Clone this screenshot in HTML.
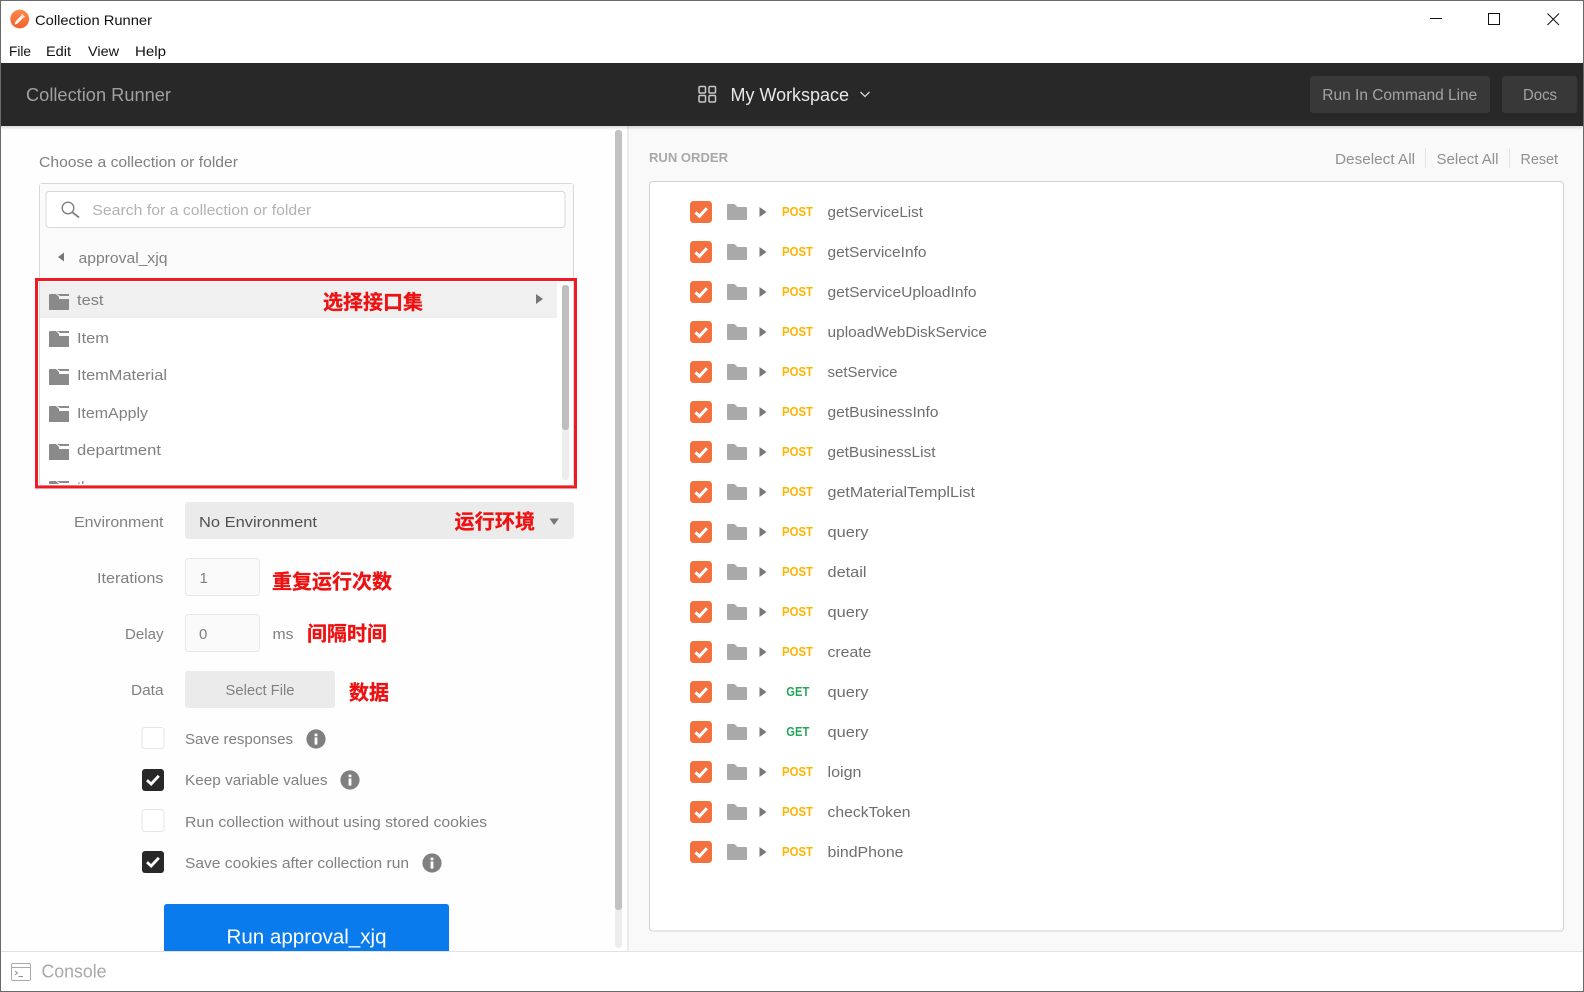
<!DOCTYPE html>
<html><head><meta charset="utf-8"><title>Collection Runner</title>
<style>
html,body{margin:0;padding:0;background:#fff;width:1584px;height:992px;overflow:hidden}
svg{display:block}
text{font-family:"Liberation Sans","Noto Sans CJK SC",sans-serif;white-space:pre}
.g{fill:#808080;font-size:15px}
.p{fill:#b2b2b2;font-size:15px}
.n{fill:#6e6e6e;font-size:15px;transform:translateY(-.6px)}
.po{fill:#ffb400;font-size:13px;font-weight:bold}
.ge{fill:#26a65b;font-size:13px;font-weight:bold}
.r{fill:#ee1111;stroke:#ee1111;stroke-width:.3px;font-size:20px;font-weight:bold;font-family:"Liberation Sans","Noto Sans CJK SC",sans-serif}
.m{fill:#111;font-size:14px}
.l{fill:#909090;font-size:15px}
</style></head><body>
<svg width="1584" height="992" viewBox="0 0 1584 992" xmlns="http://www.w3.org/2000/svg">
<defs>
<linearGradient id="lg" x1="0" y1="0" x2="0" y2="1"><stop offset="0" stop-color="#ff8a4c"/><stop offset="1" stop-color="#f0602a"/></linearGradient>
<linearGradient id="sh" x1="0" y1="0" x2="0" y2="1"><stop offset="0" stop-color="#000" stop-opacity=".14"/><stop offset="1" stop-color="#000" stop-opacity="0"/></linearGradient>
<symbol id="cf" width="20" height="16" viewBox="0 0 20 16"><path d="M0 1Q0 0 1 0H7L10 3V5H20V16H0Z" fill="#8a8a8a"/><path d="M8 0H20V2H11Z" fill="#8a8a8a"/></symbol>
<symbol id="ff" width="20" height="16" viewBox="0 0 20 16"><path d="M0 1Q0 0 1 0H7.5L10.5 3H19Q20 3 20 4V15Q20 16 19 16H1Q0 16 0 15Z" fill="#a9a9a9"/></symbol>
<symbol id="ck" width="22" height="22" viewBox="0 0 22 22"><rect width="22" height="22" rx="3.5" fill="#f4703e"/><path d="M5.5 11.5L9.5 15.2L16.8 7.2" fill="none" stroke="#fff" stroke-width="3"/></symbol>
<symbol id="tr" width="7" height="10" viewBox="0 0 7 10"><path d="M0 0L7 5L0 10Z" fill="#777"/></symbol>
<symbol id="dk" width="22" height="22" viewBox="0 0 22 22"><rect width="22" height="22" rx="3" fill="#282828"/><path d="M5 11.2L9.2 15L16.8 6.8" fill="none" stroke="#fff" stroke-width="2.8"/></symbol>
<symbol id="in" width="20" height="20" viewBox="0 0 20 20"><circle cx="10" cy="10" r="9.6" fill="#808080"/><rect x="8.6" y="8.4" width="2.8" height="7.2" fill="#fff"/><rect x="8.6" y="4.6" width="2.8" height="2.6" fill="#fff"/></symbol>
</defs>

<!-- window -->
<rect width="1584" height="992" fill="#fff"/>

<!-- left + right pane backgrounds -->
<rect x="0" y="126" width="627" height="826" fill="#fefefe"/>
<rect x="627" y="126" width="957" height="826" fill="#f9f9f9"/>
<rect x="627" y="126" width="2" height="826" fill="#ebebeb"/>

<!-- title bar -->
<circle cx="19.7" cy="19" r="9.4" fill="url(#lg)"/>
<path d="M14.5 24.5L15.5 21.5L21.5 15.5L23.5 17.5L17.5 23.5Z" fill="#fff"/>
<path d="M22 13.8L25 16.8L24 17.8L21 14.8Z" fill="#ffe9dd"/>
<text x="35" y="25" class="m" textLength="117" lengthAdjust="spacingAndGlyphs">Collection Runner</text>
<text x="9" y="56" class="m" textLength="22" lengthAdjust="spacingAndGlyphs">File</text>
<text x="46" y="56" class="m" textLength="25" lengthAdjust="spacingAndGlyphs">Edit</text>
<text x="88" y="56" class="m" textLength="31" lengthAdjust="spacingAndGlyphs">View</text>
<text x="135" y="56" class="m" textLength="31" lengthAdjust="spacingAndGlyphs">Help</text>
<rect x="1430" y="18" width="12" height="1" fill="#111"/>
<rect x="1488.5" y="13.5" width="11" height="11" fill="none" stroke="#111"/>
<path d="M1547.5 13.5L1559 25M1559 13.5L1547.5 25" stroke="#111" fill="none"/>

<!-- header -->
<rect x="0" y="63" width="1584" height="63" fill="#282828"/>
<rect x="0" y="126" width="1584" height="4" fill="url(#sh)"/>
<text x="26" y="101" fill="#a0a0a0" font-size="18.5" textLength="145" lengthAdjust="spacingAndGlyphs">Collection Runner</text>
<g fill="none" stroke="#c8c8c8" stroke-width="1.5">
<rect x="699" y="86.5" width="6.5" height="6.5" rx="1.2"/><rect x="709" y="86.5" width="6.5" height="6.5" rx="1.2"/>
<rect x="699" y="95.5" width="6.5" height="6.5" rx="1.2"/><rect x="709" y="95.5" width="6.5" height="6.5" rx="1.2"/>
</g>
<text x="730.5" y="101" fill="#e8e8e8" font-size="18.5" textLength="118.5" lengthAdjust="spacingAndGlyphs">My Workspace</text>
<path d="M860.5 92L865 96.5L869.5 92" fill="none" stroke="#d8d8d8" stroke-width="1.3"/>
<rect x="1310" y="76" width="180" height="37" rx="3" fill="#383838"/>
<text x="1322.3" y="100" fill="#a4a4a4" font-size="15.5" textLength="155" lengthAdjust="spacingAndGlyphs">Run In Command Line</text>
<rect x="1502" y="76" width="75" height="37" rx="3" fill="#383838"/>
<text x="1523" y="100" fill="#a4a4a4" font-size="15.5" textLength="34" lengthAdjust="spacingAndGlyphs">Docs</text>

<!-- left: chooser -->
<text x="39" y="167" class="g" textLength="199" lengthAdjust="spacingAndGlyphs">Choose a collection or folder</text>
<rect x="39.5" y="183.5" width="534" height="302" rx="3" fill="#fff" stroke="#d8d8d8"/>
<rect x="40" y="184" width="533" height="97" fill="#fbfbfb"/>
<rect x="46" y="191.5" width="519" height="36" rx="3" fill="#fff" stroke="#d8d8d8"/>
<circle cx="68" cy="208" r="5.8" fill="none" stroke="#808080" stroke-width="1.4"/>
<path d="M72.2 212.2L79 217.5" stroke="#808080" stroke-width="1.8" fill="none"/>
<text x="92.3" y="215" class="p" textLength="219" lengthAdjust="spacingAndGlyphs">Search for a collection or folder</text>
<path d="M64 252.5L58 257L64 261.5Z" fill="#777"/>
<text x="78.5" y="263" class="g" textLength="89" lengthAdjust="spacingAndGlyphs">approval_xjq</text>

<!-- list -->
<rect x="40" y="282" width="517" height="36" fill="#f0f0f0"/>
<use href="#cf" x="49" y="294"/><text x="77" y="305" class="g" textLength="26.5" lengthAdjust="spacingAndGlyphs">test</text>
<use href="#cf" x="49" y="331"/><text x="77" y="343" class="g" textLength="32" lengthAdjust="spacingAndGlyphs">Item</text>
<use href="#cf" x="49" y="369"/><text x="77" y="380" class="g" textLength="90" lengthAdjust="spacingAndGlyphs">ItemMaterial</text>
<use href="#cf" x="49" y="406"/><text x="77" y="418" class="g" textLength="71" lengthAdjust="spacingAndGlyphs">ItemApply</text>
<use href="#cf" x="49" y="444"/><text x="77" y="455" class="g" textLength="84" lengthAdjust="spacingAndGlyphs">department</text>
<svg x="40" y="470" width="100" height="14"><use href="#cf" x="9" y="11"/><text x="37" y="22" class="g">the</text></svg>
<use href="#tr" x="536" y="294"/>
<rect x="562" y="285" width="7" height="195" rx="3" fill="#ededed"/>
<rect x="562" y="285" width="7" height="145" rx="3" fill="#bfbfbf"/>
<rect x="36.5" y="279.5" width="539" height="207.5" fill="none" stroke="#ed1c24" stroke-width="3"/>
<text x="323" y="309" class="r" textLength="100">选择接口集</text>

<!-- env -->
<text x="74" y="527" class="g" textLength="89.5" lengthAdjust="spacingAndGlyphs">Environment</text>
<rect x="185" y="502" width="389" height="37" rx="3" fill="#ebebeb"/>
<text x="199" y="527" fill="#505050" font-size="15" textLength="118" lengthAdjust="spacingAndGlyphs">No Environment</text>
<text x="454.5" y="528.5" class="r" textLength="80.5">运行环境</text>
<path d="M549.5 518.5H558.8L554.1 525Z" fill="#777"/>

<text x="97" y="583" class="g" textLength="66.5" lengthAdjust="spacingAndGlyphs">Iterations</text>
<rect x="185.5" y="558.5" width="74" height="37" rx="3" fill="#fafafa" stroke="#e8e8e8"/>
<text x="199.5" y="583" class="g">1</text>
<text x="272" y="588.5" class="r" textLength="120">重复运行次数</text>

<text x="125" y="639" class="g" textLength="38.5" lengthAdjust="spacingAndGlyphs">Delay</text>
<rect x="185.5" y="614.5" width="74" height="37" rx="3" fill="#fafafa" stroke="#e8e8e8"/>
<text x="199" y="639" class="g">0</text>
<text x="272.5" y="639" class="g" textLength="21" lengthAdjust="spacingAndGlyphs">ms</text>
<text x="307" y="640.5" class="r" textLength="80">间隔时间</text>

<text x="131" y="695" class="g" textLength="32.5" lengthAdjust="spacingAndGlyphs">Data</text>
<rect x="185" y="671" width="150" height="37" rx="3" fill="#ebebeb"/>
<text x="225.5" y="695" class="g" textLength="69" lengthAdjust="spacingAndGlyphs">Select File</text>
<text x="349" y="699.5" class="r" textLength="40">数据</text>

<rect x="142" y="727.5" width="22" height="21" rx="3" fill="#fff" stroke="#e6e6e6"/>
<text x="185" y="744" class="g" textLength="108" lengthAdjust="spacingAndGlyphs">Save responses</text>
<use href="#in" x="306" y="729"/>
<use href="#dk" x="142" y="769"/>
<text x="185" y="785" class="g" textLength="142.5" lengthAdjust="spacingAndGlyphs">Keep variable values</text>
<use href="#in" x="340" y="770"/>
<rect x="142" y="809.5" width="22" height="22" rx="3" fill="#fff" stroke="#e6e6e6"/>
<text x="185" y="827" class="g" textLength="302" lengthAdjust="spacingAndGlyphs">Run collection without using stored cookies</text>
<use href="#dk" x="142" y="851"/>
<text x="185" y="868" class="g" textLength="224" lengthAdjust="spacingAndGlyphs">Save cookies after collection run</text>
<use href="#in" x="422" y="853"/>

<path d="M164 951V907Q164 904 167 904H446Q449 904 449 907V951Z" fill="#097bed"/>
<text x="226.5" y="943.5" fill="#fff" font-size="20" textLength="160" lengthAdjust="spacingAndGlyphs">Run approval_xjq</text>

<!-- left scrollbar -->
<rect x="615" y="130" width="7" height="818" rx="3" fill="#ededed"/>
<rect x="615" y="130" width="7" height="780" rx="3" fill="#c2c2c2"/>

<!-- right -->
<text x="649" y="162" fill="#a8a8a8" font-size="13" font-weight="bold" textLength="79" lengthAdjust="spacingAndGlyphs">RUN ORDER</text>
<text x="1335" y="164" class="l" textLength="80" lengthAdjust="spacingAndGlyphs">Deselect All</text>
<rect x="1425" y="148" width="1" height="20" fill="#e4e4e4"/>
<text x="1436.5" y="164" class="l" textLength="62" lengthAdjust="spacingAndGlyphs">Select All</text>
<rect x="1509" y="148" width="1" height="20" fill="#e4e4e4"/>
<text x="1520.5" y="164" class="l" textLength="37.5" lengthAdjust="spacingAndGlyphs">Reset</text>
<rect x="649.5" y="181.5" width="914" height="749.5" rx="3" fill="#fff" stroke="#d2d2d2"/>

<use href="#ck" x="690" y="201"/><use href="#ff" x="727" y="204"/><use href="#tr" x="759.5" y="207"/><text x="782" y="216" class="po" textLength="31" lengthAdjust="spacingAndGlyphs">POST</text><text x="827.5" y="217.5" class="n" textLength="95.5" lengthAdjust="spacingAndGlyphs">getServiceList</text>
<use href="#ck" x="690" y="241"/><use href="#ff" x="727" y="244"/><use href="#tr" x="759.5" y="247"/><text x="782" y="256" class="po" textLength="31" lengthAdjust="spacingAndGlyphs">POST</text><text x="827.5" y="257.5" class="n" textLength="99" lengthAdjust="spacingAndGlyphs">getServiceInfo</text>
<use href="#ck" x="690" y="281"/><use href="#ff" x="727" y="284"/><use href="#tr" x="759.5" y="287"/><text x="782" y="296" class="po" textLength="31" lengthAdjust="spacingAndGlyphs">POST</text><text x="827.5" y="297.5" class="n" textLength="149" lengthAdjust="spacingAndGlyphs">getServiceUploadInfo</text>
<use href="#ck" x="690" y="321"/><use href="#ff" x="727" y="324"/><use href="#tr" x="759.5" y="327"/><text x="782" y="336" class="po" textLength="31" lengthAdjust="spacingAndGlyphs">POST</text><text x="827.5" y="337.5" class="n" textLength="159.5" lengthAdjust="spacingAndGlyphs">uploadWebDiskService</text>
<use href="#ck" x="690" y="361"/><use href="#ff" x="727" y="364"/><use href="#tr" x="759.5" y="367"/><text x="782" y="376" class="po" textLength="31" lengthAdjust="spacingAndGlyphs">POST</text><text x="827.5" y="377.5" class="n" textLength="70" lengthAdjust="spacingAndGlyphs">setService</text>
<use href="#ck" x="690" y="401"/><use href="#ff" x="727" y="404"/><use href="#tr" x="759.5" y="407"/><text x="782" y="416" class="po" textLength="31" lengthAdjust="spacingAndGlyphs">POST</text><text x="827.5" y="417.5" class="n" textLength="111" lengthAdjust="spacingAndGlyphs">getBusinessInfo</text>
<use href="#ck" x="690" y="441"/><use href="#ff" x="727" y="444"/><use href="#tr" x="759.5" y="447"/><text x="782" y="456" class="po" textLength="31" lengthAdjust="spacingAndGlyphs">POST</text><text x="827.5" y="457.5" class="n" textLength="108" lengthAdjust="spacingAndGlyphs">getBusinessList</text>
<use href="#ck" x="690" y="481"/><use href="#ff" x="727" y="484"/><use href="#tr" x="759.5" y="487"/><text x="782" y="496" class="po" textLength="31" lengthAdjust="spacingAndGlyphs">POST</text><text x="827.5" y="497.5" class="n" textLength="147.5" lengthAdjust="spacingAndGlyphs">getMaterialTemplList</text>
<use href="#ck" x="690" y="521"/><use href="#ff" x="727" y="524"/><use href="#tr" x="759.5" y="527"/><text x="782" y="536" class="po" textLength="31" lengthAdjust="spacingAndGlyphs">POST</text><text x="827.5" y="537.5" class="n" textLength="41" lengthAdjust="spacingAndGlyphs">query</text>
<use href="#ck" x="690" y="561"/><use href="#ff" x="727" y="564"/><use href="#tr" x="759.5" y="567"/><text x="782" y="576" class="po" textLength="31" lengthAdjust="spacingAndGlyphs">POST</text><text x="827.5" y="577.5" class="n" textLength="39" lengthAdjust="spacingAndGlyphs">detail</text>
<use href="#ck" x="690" y="601"/><use href="#ff" x="727" y="604"/><use href="#tr" x="759.5" y="607"/><text x="782" y="616" class="po" textLength="31" lengthAdjust="spacingAndGlyphs">POST</text><text x="827.5" y="617.5" class="n" textLength="41" lengthAdjust="spacingAndGlyphs">query</text>
<use href="#ck" x="690" y="641"/><use href="#ff" x="727" y="644"/><use href="#tr" x="759.5" y="647"/><text x="782" y="656" class="po" textLength="31" lengthAdjust="spacingAndGlyphs">POST</text><text x="827.5" y="657.5" class="n" textLength="44" lengthAdjust="spacingAndGlyphs">create</text>
<use href="#ck" x="690" y="681"/><use href="#ff" x="727" y="684"/><use href="#tr" x="759.5" y="687"/><text x="786.3" y="696" class="ge" textLength="23" lengthAdjust="spacingAndGlyphs">GET</text><text x="827.5" y="697.5" class="n" textLength="41" lengthAdjust="spacingAndGlyphs">query</text>
<use href="#ck" x="690" y="721"/><use href="#ff" x="727" y="724"/><use href="#tr" x="759.5" y="727"/><text x="786.3" y="736" class="ge" textLength="23" lengthAdjust="spacingAndGlyphs">GET</text><text x="827.5" y="737.5" class="n" textLength="41" lengthAdjust="spacingAndGlyphs">query</text>
<use href="#ck" x="690" y="761"/><use href="#ff" x="727" y="764"/><use href="#tr" x="759.5" y="767"/><text x="782" y="776" class="po" textLength="31" lengthAdjust="spacingAndGlyphs">POST</text><text x="827.5" y="777.5" class="n" textLength="34" lengthAdjust="spacingAndGlyphs">loign</text>
<use href="#ck" x="690" y="801"/><use href="#ff" x="727" y="804"/><use href="#tr" x="759.5" y="807"/><text x="782" y="816" class="po" textLength="31" lengthAdjust="spacingAndGlyphs">POST</text><text x="827.5" y="817.5" class="n" textLength="83" lengthAdjust="spacingAndGlyphs">checkToken</text>
<use href="#ck" x="690" y="841"/><use href="#ff" x="727" y="844"/><use href="#tr" x="759.5" y="847"/><text x="782" y="856" class="po" textLength="31" lengthAdjust="spacingAndGlyphs">POST</text><text x="827.5" y="857.5" class="n" textLength="76" lengthAdjust="spacingAndGlyphs">bindPhone</text>

<!-- footer -->
<rect x="0" y="951" width="1584" height="41" fill="#fff"/>
<rect x="0" y="951" width="1584" height="1" fill="#e2e2e2"/>
<rect x="11.5" y="963.5" width="19" height="17" rx="1.5" fill="#fff" stroke="#a8a8a8"/>
<path d="M12 967.5H30" stroke="#a8a8a8" fill="none"/>
<path d="M15 971L17.5 973L15 975M18.5 976.5H23" stroke="#909090" fill="none"/>
<text x="41.5" y="977.5" fill="#a8a8a8" font-size="18.5" textLength="65" lengthAdjust="spacingAndGlyphs">Console</text>

<!-- window border -->
<rect x="0" y="0" width="1584" height="1" fill="#6a6a6a"/>
<rect x="0" y="0" width="1" height="992" fill="#6a6a6a"/>
<rect x="1583" y="0" width="1" height="992" fill="#6a6a6a"/>
<rect x="0" y="991" width="1584" height="1" fill="#6a6a6a"/>
</svg>
</body></html>
